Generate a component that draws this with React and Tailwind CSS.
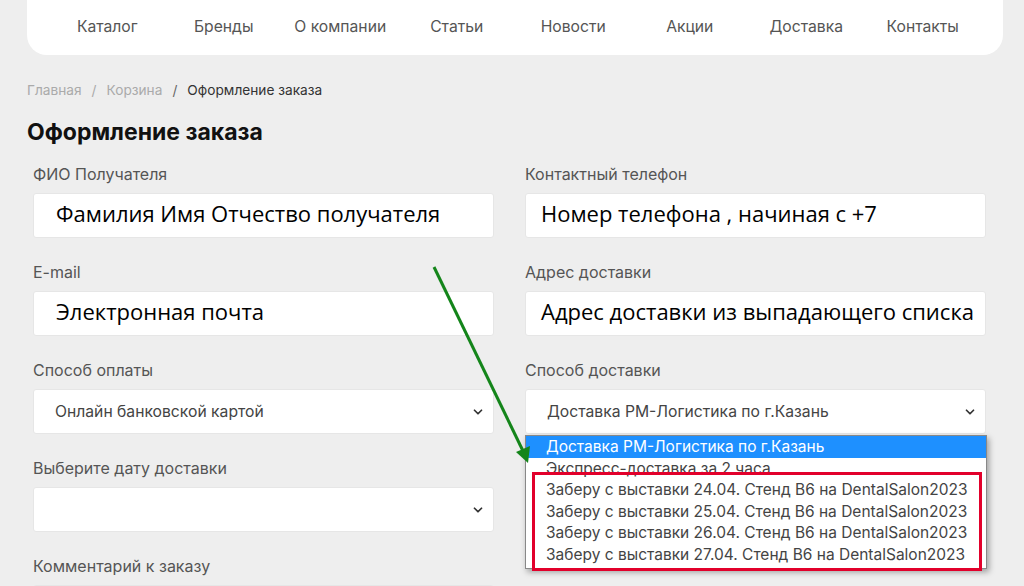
import { ChevronDown } from "lucide-react";

const nav = ["Каталог", "Бренды", "О компании", "Статьи", "Новости", "Акции", "Доставка", "Контакты"];

const shows = ["24.04.", "25.04.", "26.04.", "27.04."];

function Label({ children }) {
    return <div className="text-[16px] leading-[20px] text-[#555] mb-[9px]">{children}</div>;
}

function TextBox({ text, pad = "pl-[22px]" }) {
    return (
        <div
            className={`h-[45px] bg-white rounded-[3px] border border-[#e6e6e6] flex items-center ${pad} pb-[4px] text-[22px] text-black whitespace-nowrap overflow-hidden`}
            style={{ fontFamily: '"Open Sans", sans-serif' }}
        >
            {text}
        </div>
    );
}

function SelectBox({ text }) {
    return (
        <div className="h-[45px] bg-white rounded-[3px] border border-[#e6e6e6] flex items-center justify-between pl-[21px] pr-[8px] text-[15.7px] text-[#444]">
            <span>{text}</span>
            <ChevronDown className="w-[14px] h-[14px] text-[#333]" strokeWidth={3} />
        </div>
    );
}

export default function App() {
    return (
        <div className="h-[586px] overflow-hidden bg-[#eeeeee] font-['Inter',sans-serif] relative">
            {/* top nav */}
            <div className="mx-[27px] w-[976px] h-[55px] bg-white rounded-b-[20px] px-[22px] grid grid-cols-8 items-center text-center text-[15.7px] text-[#555]">
                {nav.map((n) => (
                    <div key={n} className="pb-[2px]">{n}</div>
                ))}
            </div>

            <div className="px-[27px]">
                {/* breadcrumbs */}
                <div className="mt-[26px] text-[13.7px] leading-[18px] flex gap-[10px]">
                    <span className="text-[#aaa]">Главная</span>
                    <span className="text-[#aaa]">/</span>
                    <span className="text-[#aaa]">Корзина</span>
                    <span className="text-[#666]">/</span>
                    <span className="text-[#333]">Оформление заказа</span>
                </div>

                <h1 className="mt-[19px] text-[23px] leading-[28px] font-bold text-[#111]">Оформление заказа</h1>

                {/* form */}
                <div className="mt-[18px] ml-[6px] w-[953px] grid grid-cols-2 gap-x-[31px] gap-y-[24px]">
                    <div>
                        <Label>ФИО Получателя</Label>
                        <TextBox text="Фамилия Имя Отчество получателя" />
                    </div>
                    <div>
                        <Label>Контактный телефон</Label>
                        <TextBox text="Номер телефона , начиная с +7" pad="pl-[15px]" />
                    </div>
                    <div>
                        <Label>E-mail</Label>
                        <TextBox text="Электронная почта" />
                    </div>
                    <div>
                        <Label>Адрес доставки</Label>
                        <TextBox text="Адрес доставки из выпадающего списка" pad="pl-[15px]" />
                    </div>
                    <div>
                        <Label>Способ оплаты</Label>
                        <SelectBox text="Онлайн банковской картой" />
                    </div>
                    <div className="relative">
                        <Label>Способ доставки</Label>
                        <SelectBox text="Доставка РМ-Логистика по г.Казань" />

                        {/* open dropdown */}
                        <div className="absolute left-0 top-[75px] w-[462px] bg-white border border-[#888] shadow-[2px_3px_6px_rgba(0,0,0,0.35)] pb-[2px] z-10 text-[15.5px] text-[#444]">
                            <div className="h-[21.6px] leading-[21.6px] pl-[20px] bg-[#1e90ff] text-white">
                                Доставка РМ-Логистика по г.Казань
                            </div>
                            <div className="h-[21.6px] leading-[21.6px] pl-[20px]">Экспресс-доставка за 2 часа</div>
                            {shows.map((d) => (
                                <div key={d} className="h-[21.6px] leading-[21.6px] pl-[20px]">
                                    Заберу с выставки {d} Стенд B6 на DentalSalon2023
                                </div>
                            ))}
                            <div className="absolute left-[6px] top-[36px] w-[450px] h-[99px] border-[3px] border-[#e2002b]" />
                        </div>
                    </div>
                    <div>
                        <Label>Выберите дату доставки</Label>
                        <SelectBox text="" />
                    </div>
                    <div />
                    <div>
                        <Label>Комментарий к заказу</Label>
                        <div className="h-[45px] bg-white rounded-[3px] border border-[#e6e6e6]" />
                    </div>
                </div>
            </div>

            {/* green arrow annotation */}
            <svg className="absolute left-0 top-0 z-20 pointer-events-none" width="1024" height="586">
                <line x1="434" y1="267" x2="524" y2="453" stroke="#14851a" strokeWidth="3" />
                <polygon points="528,463 516,452 530,446" fill="#14851a" />
            </svg>
        </div>
    );
}
